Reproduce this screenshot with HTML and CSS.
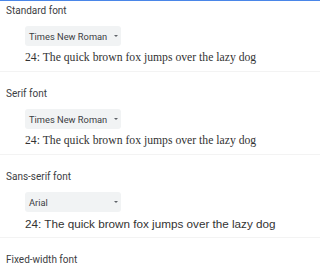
FILE: index.html
```html
<!DOCTYPE html>
<html lang="en">
<head>
  <meta charset="UTF-8">
  <title>Customize fonts</title>
  <link rel="stylesheet" href="styles.css">
</head>
<body>
  <div class="top-bar"></div>
  <div class="fonts">
    <div class="font-section">
      <div class="font-label">Standard font</div>
      <div class="dropdown"><span>Times New Roman</span><span class="arrow"></span></div>
      <div class="sample serif">24: The quick brown fox jumps over the lazy dog</div>
    </div>
    <div class="font-section">
      <div class="font-label">Serif font</div>
      <div class="dropdown"><span>Times New Roman</span><span class="arrow"></span></div>
      <div class="sample serif">24: The quick brown fox jumps over the lazy dog</div>
    </div>
    <div class="font-section">
      <div class="font-label">Sans-serif font</div>
      <div class="dropdown"><span>Arial</span><span class="arrow"></span></div>
      <div class="sample sans">24: The quick brown fox jumps over the lazy dog</div>
    </div>
    <div class="font-section">
      <div class="font-label">Fixed-width font</div>
    </div>
  </div>
</body>
</html>
```

FILE: styles.css
```css
body {
  margin: 0;
  font-family: Roboto, "Liberation Sans", Arial, sans-serif;
  background-color: #fff;
  overflow: hidden;
}

.top-bar {
  height: 1px;
  background-color: #4a86e8;
}

.fonts {
  margin-top: -12px;
}

.font-section {
  padding: 12px 0 5px 6px;
  border-bottom: 1px solid #f3f3f3;
}

.font-label {
  font-size: 10px;
  line-height: 20px;
  color: #3c4043;
}

.dropdown {
  display: flex;
  justify-content: space-between;
  align-items: center;
  box-sizing: border-box;
  width: 96px;
  height: 20px;
  margin: 5px 0 4px 19px;
  padding: 0 3px 0 4px;
  background-color: #f1f3f4;
  border-radius: 3px;
  font-size: 9.3px;
  color: #3c4043;
}

.arrow {
  width: 0;
  height: 0;
  border-left: 2.5px solid transparent;
  border-right: 2.5px solid transparent;
  border-top: 2.5px solid #5f6368;
}

.sample {
  margin-left: 19px;
  font-size: 11.7px;
  line-height: 16px;
  color: #333;
  white-space: nowrap;
}

.serif {
  font-family: "Liberation Serif", "Times New Roman", serif;
}

.sans {
  font-family: "Liberation Sans", Arial, sans-serif;
}
```
